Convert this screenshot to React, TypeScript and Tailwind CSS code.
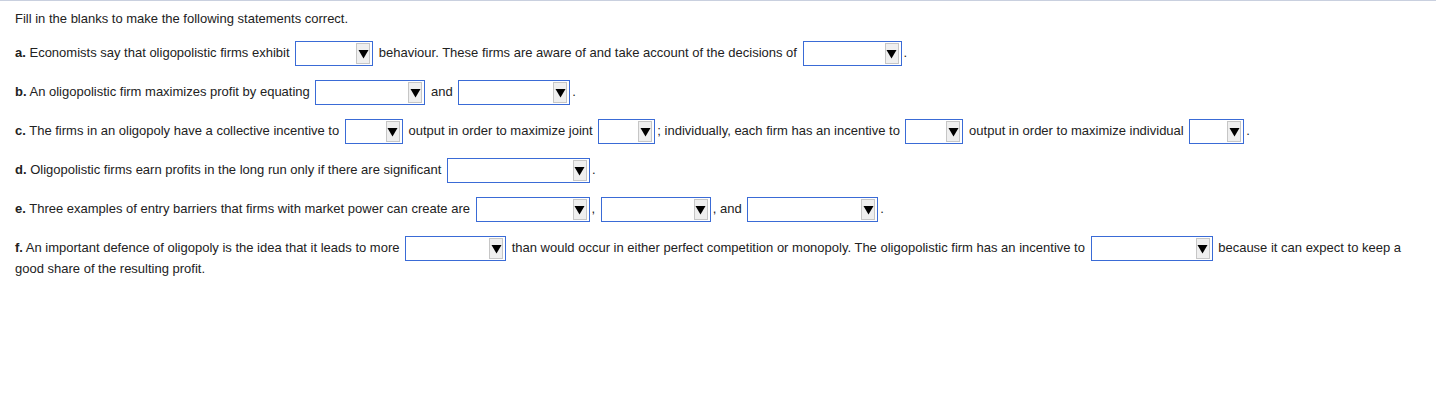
import React from "react";

function Blank({ w }: { w: number }) {
  return (
    <span
      className="mx-[2px] -my-[3px] inline-flex h-[25px] items-center justify-end border border-[#3a6bd6] bg-white pr-[2px] align-middle"
      style={{ width: w }}
    >
      <span className="flex h-[21px] w-[14px] items-center justify-center border border-[#c6c6c6] bg-[#efefef]">
        <svg width="11" height="10" viewBox="0 0 11 10">
          <path d="M0.5 1 H10.5 L5.5 9.5 Z" fill="#000" />
        </svg>
      </span>
    </span>
  );
}

function Row({ children }: { children: React.ReactNode }) {
  return <div className="leading-[21px]">{children}</div>;
}

export default function App() {
  return (
    <div
      className="min-h-[408px] border-t border-[#c9d0df] bg-white px-[15px] pt-[7px] text-[13px] text-[#222]"
      style={{ fontFamily: '"Liberation Sans", Arial, sans-serif' }}
    >
      <div className="leading-[21px]">Fill in the blanks to make the following statements correct.</div>

      <div className="mt-[13px] flex flex-col gap-[18px]">
        <Row>
          <b>a.</b> Economists say that oligopolistic firms exhibit <Blank w={78} /> behaviour. These firms are
          aware of and take account of the decisions of <Blank w={99} />.
        </Row>
        <Row>
          <b>b.</b> An oligopolistic firm maximizes profit by equating <Blank w={110} /> and <Blank w={112} />.
        </Row>
        <Row>
          <b>c.</b> The firms in an oligopoly have a collective incentive to <Blank w={58} /> output in order to
          maximize joint <Blank w={57} />; individually, each firm has an incentive to <Blank w={58} /> output in
          order to maximize individual <Blank w={55} />.
        </Row>
        <Row>
          <b>d.</b> Oligopolistic firms earn profits in the long run only if there are significant{" "}
          <Blank w={143} />.
        </Row>
        <Row>
          <b>e.</b> Three examples of entry barriers that firms with market power can create are <Blank w={114} />
          , <Blank w={110} />, and <Blank w={131} />.
        </Row>
        <Row>
          <b>f.</b> An important defence of oligopoly is the idea that it leads to more <Blank w={101} /> than
          would occur in either perfect competition or monopoly. The oligopolistic firm has an incentive to{" "}
          <Blank w={122} /> because it can expect to keep a good share of the resulting profit.
        </Row>
      </div>
    </div>
  );
}
